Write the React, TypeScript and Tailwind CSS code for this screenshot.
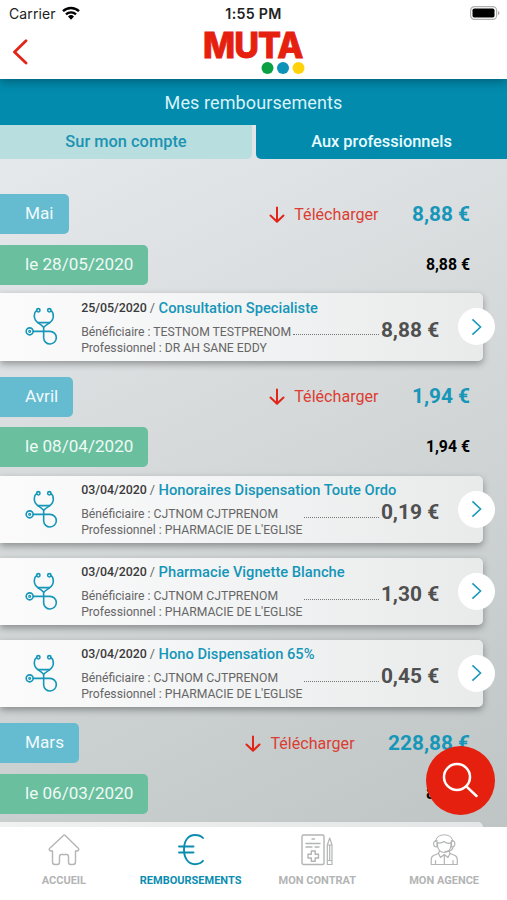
import type { ReactNode } from "react";

const months = [
  {
    name: "Mai",
    total: "8,88 €",
    day: "28/05/2020",
    dayTotal: "8,88 €",
    items: [
      {
        date: "25/05/2020",
        label: "Consultation Specialiste",
        beneficiary: "TESTNOM TESTPRENOM",
        professional: "DR AH SANE EDDY",
        amount: "8,88 €",
      },
    ],
  },
  {
    name: "Avril",
    total: "1,94 €",
    day: "08/04/2020",
    dayTotal: "1,94 €",
    items: [
      {
        date: "03/04/2020",
        label: "Honoraires Dispensation Toute Ordo",
        beneficiary: "CJTNOM CJTPRENOM",
        professional: "PHARMACIE DE L'EGLISE",
        amount: "0,19 €",
      },
      {
        date: "03/04/2020",
        label: "Pharmacie Vignette Blanche",
        beneficiary: "CJTNOM CJTPRENOM",
        professional: "PHARMACIE DE L'EGLISE",
        amount: "1,30 €",
      },
      {
        date: "03/04/2020",
        label: "Hono Dispensation 65%",
        beneficiary: "CJTNOM CJTPRENOM",
        professional: "PHARMACIE DE L'EGLISE",
        amount: "0,45 €",
      },
    ],
  },
  {
    name: "Mars",
    total: "228,88 €",
    day: "06/03/2020",
    dayTotal: "8,88 €",
    items: [],
  },
];

type Item = (typeof months)[0]["items"][0];

function Stethoscope() {
  return (
    <svg
      viewBox="30 36 98 117"
      className="h-[39px] w-[32.67px] shrink-0"
      fill="none"
      stroke="#1696b8"
      strokeWidth="4.8"
      strokeLinecap="round"
      strokeLinejoin="round"
    >
      <circle cx="70" cy="46" r="5" />
      <circle cx="103" cy="46" r="5" />
      <path d="M65 47C58 51 58 58 58 64C58 74 63 79 70 84C76 88 81 91 86 97V129A19 19 0 1 0 105 109H55" />
      <path d="M108 47C115 51 115 58 115 64C115 74 110 79 103 84C97 88 91 91 86 97" />
      <path d="M70 83H103" />
      <circle cx="44" cy="109" r="10.500" />
      <circle cx="44" cy="109" r="3" strokeWidth="3.500" />
    </svg>
  );
}

function Card({ item }: { item: Item }) {
  return (
    <div className="relative flex h-[67.5px] w-[482.5px] items-start rounded-r-[5px] bg-linear-to-r from-[#fbfbfc] to-[#e9ebeb] pl-[25px] pt-[14px] shadow-[0_3px_7px_rgba(0,0,0,0.34)]">
      <Stethoscope />
      <div className="-mt-[7.5px] ml-[23.500px] w-[358px]">
        <div className="flex h-[17px] items-center whitespace-pre text-[12.6px] text-[#666]">
          <span className="w-[65.5px] text-[12.4px] font-medium tracking-[-0.05px] text-[#3a3a3a]">
            {item.date}
          </span>
          <span> / </span>
          <span className="ml-[0.5px] text-[14.7px] font-medium text-[#1696b8]">
            {item.label}
          </span>
        </div>
        <div className="flex">
          <div className="mt-[7px] whitespace-nowrap text-[12.2px] leading-4 text-[#666]">
            <p>Bénéficiaire : {item.beneficiary}</p>
            <p>Professionnel : {item.professional}</p>
          </div>
          <div className="ml-[2px] mr-[2px] mt-[17.5px] h-0 flex-1 border-b border-dotted border-[#777]" />
          <span className="text-[20.9px] leading-[26px] font-bold text-[#505050]">
            {item.amount}
          </span>
        </div>
      </div>
      <div className="absolute -right-3 top-[15px] flex size-[37px] items-center justify-center rounded-full bg-white">
        <svg
          viewBox="0 0 12 20"
          className="h-[18px] w-[11px]"
          fill="none"
          stroke="#1696b8"
          strokeWidth="1.7"
        >
          <path d="M1.500 1.500L10.500 10L1.500 18.500" />
        </svg>
      </div>
    </div>
  );
}

function DownArrow() {
  return (
    <svg
      viewBox="0 0 16 18"
      className="mt-px h-[18px] w-4"
      fill="none"
      stroke="#e22518"
      strokeWidth="2"
      strokeLinecap="round"
      strokeLinejoin="round"
    >
      <path d="M8 1.500V15.500M1.500 9.500L8 15.700L14.500 9.500" />
    </svg>
  );
}

function NavItem({
  label,
  active,
  children,
}: {
  label: string;
  active?: boolean;
  children: ReactNode;
}) {
  return (
    <div
      className={`flex flex-1 flex-col items-center pl-px pt-[6px] ${active ? "text-[#0b8db0]" : "text-[#b3b4b4]"}`}
    >
      <svg
        viewBox="0 0 32 34"
        className="h-[34px] w-8"
        fill="none"
        stroke="currentColor"
        strokeWidth="1.4"
        strokeLinecap="round"
        strokeLinejoin="round"
      >
        {children}
      </svg>
      <span className="mt-[6px] whitespace-nowrap text-[11px] leading-4 font-bold">
        {label}
      </span>
    </div>
  );
}

export default function App() {
  return (
    <div className="relative flex h-[900px] w-[507px] flex-col overflow-hidden bg-white font-['Roboto',sans-serif]">
      <header className="relative z-10 h-[79px] shrink-0 bg-white shadow-[0_2px_10px_rgba(0,0,0,0.35)]">
        {/* Status bar */}
        <div className="grid h-7 grid-cols-3 items-center px-[9px] font-['Inter',sans-serif] text-[14px] text-[#222]">
          <div className="flex items-center gap-[6px]">
            <span className="-mt-px tracking-[0.1px]">Carrier</span>
            <svg viewBox="0 0 18 14" className="-mt-[3px] h-[14px] w-[18px]">
              <g fill="none" stroke="#000" strokeWidth="2.400">
                <path d="M1 5.200A11.500 11.500 0 0 1 17 5.200" />
                <path d="M4 8.400A7.200 7.200 0 0 1 14 8.400" />
              </g>
              <path d="M6 10.500A4.300 4.300 0 0 1 12 10.500L9 13.700Z" fill="#000" />
            </svg>
          </div>
          <span className="text-center text-[14.2px] font-semibold tracking-[0.3px]">
            1:55 PM
          </span>
          <svg
            viewBox="0 0 30 14"
            className="-mr-[2px] -mt-[2px] h-[14px] w-[30px] justify-self-end"
          >
            <rect x="0.600" y="0.600" width="26" height="12.800" rx="3.800" fill="#fff" stroke="#b0b0b0" strokeWidth="1.200" />
            <rect x="2.500" y="2.500" width="22" height="9" rx="1.800" fill="#000" />
            <path d="M28 5V9Q29.500 8.500 29.500 7T28 5" fill="#aaa" />
          </svg>
        </div>
        <div className="flex justify-between px-3">
          <svg
            viewBox="0 0 16 26"
            className="mt-[11px] h-[26px] w-4"
            fill="none"
            stroke="#e22518"
            strokeWidth="2.800"
            strokeLinecap="round"
            strokeLinejoin="round"
          >
            <path d="M14 1.800L2.500 13L14 24" />
          </svg>
          <svg viewBox="0 0 102 48" className="h-12 w-[102px] overflow-visible">
            <text
              x="0"
              y="29.500"
              textLength="99.500"
              lengthAdjust="spacingAndGlyphs"
              fill="#e5200f"
              stroke="#e5200f"
              strokeWidth="0.800"
              fontFamily="Inter, sans-serif"
              fontWeight="800"
              fontSize="35.500"
              letterSpacing="-0.900"
            >
              MUTA
            </text>
            <circle cx="64.500" cy="40" r="6" fill="#0ca045" />
            <circle cx="80" cy="40" r="6" fill="#0d92b8" />
            <circle cx="95.500" cy="40" r="6" fill="#ffd20a" />
          </svg>
          <div className="w-4" />
        </div>
      </header>

      <h1 className="h-[46px] shrink-0 bg-[#028bad] text-center text-[18px] leading-[47px] tracking-[0.1px] text-[#d9f2f8]">
        Mes remboursements
      </h1>

      <main className="relative min-h-0 flex-1 overflow-hidden bg-linear-155 from-[#e7eaed] via-[#d5d9da] via-45% to-[#bfc5c4]">
        <div className="flex gap-1 text-center text-[16.4px] leading-[34px] font-medium">
          <div className="h-[34px] w-[252px] rounded-br-[5px] bg-[#b9dee0] text-[#1a94b2]">
            Sur mon compte
          </div>
          <div className="h-[34px] w-[251px] rounded-bl-[5px] bg-[#028bad] text-[#e8fbff]">
            Aux professionnels
          </div>
        </div>

        <div className="mt-[35px] flex flex-col gap-4">
          {months.map((month) => (
            <section key={month.name}>
              <div className="flex h-10 items-center justify-between pr-[37px]">
                <span className="h-10 rounded-r-[5px] bg-[#65bbd0] pl-[25px] pr-[15px] text-[17.2px] leading-[39px] text-[#f0fafc]">
                  {month.name}
                </span>
                <div className="flex items-center">
                  <DownArrow />
                  <span className="ml-[9px] pt-[2px] text-[16.1px] text-[#dc3d33]">
                    Télécharger
                  </span>
                  <span className="ml-[33.5px] pt-px text-[20.8px] font-bold text-[#1696b8]">
                    {month.total}
                  </span>
                </div>
              </div>
              <div className="mt-[10.500px] flex h-10 items-center justify-between pr-[37px]">
                <span className="h-10 rounded-r-[5px] bg-[#6abf9f] pl-[25px] pr-[15px] text-[17.100px] leading-[39px] text-[#effaf5]">
                  le {month.day}
                </span>
                <span className="text-[15.8px] font-bold text-black">
                  {month.dayTotal}
                </span>
              </div>
              <div className="mt-[8.500px] flex flex-col gap-[14.500px]">
                {month.items.map((item) => (
                  <Card key={item.label} item={item} />
                ))}
                {month.items.length === 0 && (
                  <div className="h-[67px] w-[482.5px] rounded-r-[5px] bg-linear-to-r from-[#f0f1f1] to-[#e3e6e6] shadow-md" />
                )}
              </div>
            </section>
          ))}
        </div>
      </main>

      <button className="absolute right-3 top-[746px] flex size-[69px] items-center justify-center rounded-full bg-[#e5200f]">
        <svg
          viewBox="0 0 36 36"
          className="-ml-px -mt-px size-9"
          fill="none"
          stroke="#fff"
          strokeWidth="2.500"
          strokeLinecap="round"
        >
          <circle cx="15" cy="15" r="13" />
          <path d="M24.300 24.300L34.500 34" />
        </svg>
      </button>

      <nav className="z-10 flex h-[73.5px] shrink-0 bg-white">
        <NavItem label="ACCUEIL">
          <path d="M16 2L1.500 15.500Q0.500 17.500 3 18H4.500V29Q4.500 31.500 7 31.500H9.500Q11.500 31.500 11.500 29V23.500Q11.500 21.500 13.500 21.500H18.500Q20.500 21.500 20.500 23.500V29Q20.500 31.500 22.500 31.500H25Q27.500 31.500 27.500 29V18H29Q31.500 17.500 30.500 15.500L17 2.200Q16.500 1.700 16 2Z" />
        </NavItem>
        <NavItem label="REMBOURSEMENTS" active>
          <path
            strokeWidth="1.900"
            d="M28 5Q25.500 2 20 2C13 2 9 8 9 16.500C9 25 13 31.200 20 31.200Q25.500 31.200 28 27.800M4 13.500H18.500M4 19.500H18.500"
          />
        </NavItem>
        <NavItem label="MON CONTRAT">
          <rect x="1" y="2" width="22" height="29.500" rx="1.500" />
          <path d="M11 6H13.500M5 10.500H19M5 14H11M14 14H18" />
          <path d="M10.300 18H14.200V21.200H17.500V25H14.200V28.200H10.300V25H7V21.200H10.300Z" />
          <path d="M26.300 12L28.700 5L31 12V31.500H26.300ZM26.300 12H31M26.300 27.500H31M28.700 12V27.500" strokeWidth="1.200" />
        </NavItem>
        <NavItem label="MON AGENCE">
          <g strokeWidth="1.200">
            <path d="M7.500 8.500C9 -0.500 23.500 -0.500 25 8.500M9.500 9.500Q12 11 16 8.500Q20 11.500 23 9.500V12C23 22 9.500 22 9.500 12Z" />
            <path d="M9 7.500C4.500 7.500 4.500 14 9 14ZM23.500 7.500C28 7.500 28 14 23.500 14Z" />
            <path d="M25 14.500Q24 18.500 17 18.500M11.500 18L10.500 20.500L5.500 22.500Q3.200 23.500 3.200 27V31.500H29.300V27Q29.300 23.500 27 22.500L22 20.500L21 18" />
            <path d="M10.500 20.500L12.500 24.500L16.300 21.500L20 24.500L22 20.500M16.300 21.500V31M7.500 27.500V31M25 27.500V31" />
          </g>
        </NavItem>
      </nav>
    </div>
  );
}
